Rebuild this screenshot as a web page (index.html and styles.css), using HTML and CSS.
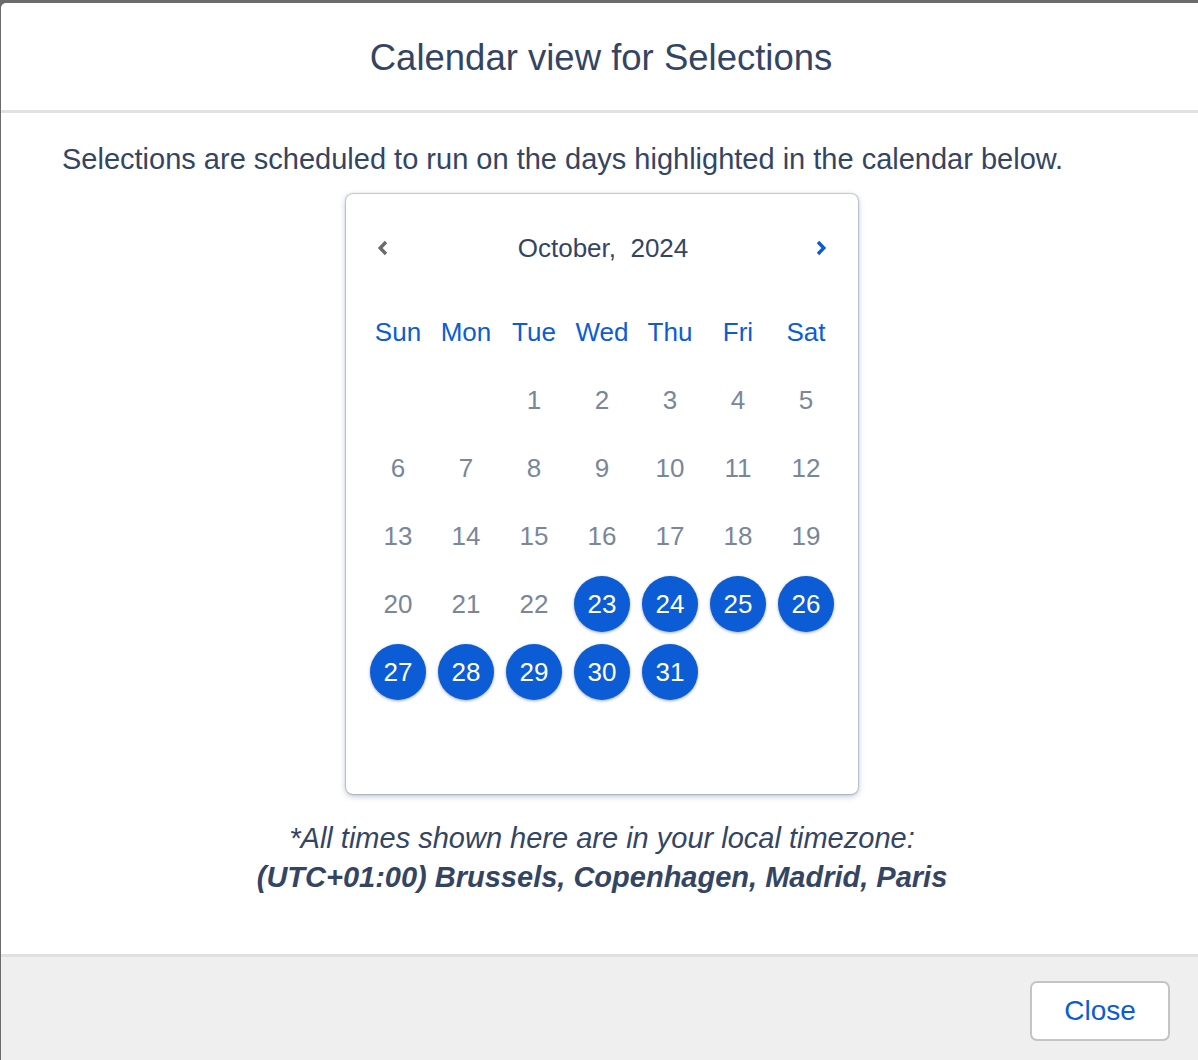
FILE: index.html
```html
<!DOCTYPE html>
<html>
<head>
<meta charset="utf-8">
<link rel="stylesheet" href="styles.css">
</head>
<body>
<div class="backdrop">
  <div class="modal">
    <div class="modal-header">
      <h1 class="modal-title">Calendar view for Selections</h1>
    </div>
    <div class="modal-body">
      <p class="intro">Selections are scheduled to run on the days highlighted in the calendar below.</p>
      <div class="calendar">
        <div class="cal-nav">
          <span class="nav-btn"><svg width="14" height="18" viewBox="0 0 14 18"><path d="M10 3 L4.2 9 L10 15" fill="none" stroke="#6b6b6b" stroke-width="3.4"/></svg></span>
          <span class="cal-month">October,&nbsp; 2024</span>
          <span class="nav-btn"><svg width="14" height="18" viewBox="0 0 14 18"><path d="M4 3 L9.8 9 L4 15" fill="none" stroke="#0b5cd5" stroke-width="3.4"/></svg></span>
        </div>
        <div class="cal-grid">
          <span class="wd">Sun</span><span class="wd">Mon</span><span class="wd">Tue</span><span class="wd">Wed</span><span class="wd">Thu</span><span class="wd">Fri</span><span class="wd">Sat</span>
          <span class="day"></span><span class="day"></span>
          <span class="day"><i>1</i></span><span class="day"><i>2</i></span><span class="day"><i>3</i></span><span class="day"><i>4</i></span><span class="day"><i>5</i></span>
          <span class="day"><i>6</i></span><span class="day"><i>7</i></span><span class="day"><i>8</i></span><span class="day"><i>9</i></span><span class="day"><i>10</i></span><span class="day"><i>11</i></span><span class="day"><i>12</i></span>
          <span class="day"><i>13</i></span><span class="day"><i>14</i></span><span class="day"><i>15</i></span><span class="day"><i>16</i></span><span class="day"><i>17</i></span><span class="day"><i>18</i></span><span class="day"><i>19</i></span>
          <span class="day"><i>20</i></span><span class="day"><i>21</i></span><span class="day"><i>22</i></span><span class="day on"><i>23</i></span><span class="day on"><i>24</i></span><span class="day on"><i>25</i></span><span class="day on"><i>26</i></span>
          <span class="day on"><i>27</i></span><span class="day on"><i>28</i></span><span class="day on"><i>29</i></span><span class="day on"><i>30</i></span><span class="day on"><i>31</i></span><span class="day"></span><span class="day"></span>
          <span class="day"></span><span class="day"></span><span class="day"></span><span class="day"></span><span class="day"></span><span class="day"></span><span class="day"></span>
        </div>
      </div>
      <div class="note">
        <div class="note-line">*All times shown here are in your local timezone:</div>
        <div class="note-line strong">(UTC+01:00) Brussels, Copenhagen, Madrid, Paris</div>
      </div>
    </div>
    <div class="modal-footer">
      <button class="btn-close">Close</button>
    </div>
  </div>
</div>
</body>
</html>
```
FILE: styles.css
```css
html,body{margin:0;padding:0}
body{
  background:#6b6b6b;
  font-family:"Liberation Sans",Arial,sans-serif;
  color:#344563;
  width:1198px;height:1060px;overflow:hidden;
}
.backdrop{padding:3px 0 0 1px}
.modal{
  width:1200px;height:1057px;
  background:#fff;
  border-top-left-radius:5px;
  display:flex;flex-direction:column;
}
.modal-header{
  height:107px;
  border-bottom:3px solid #e1e1e1;
  display:flex;align-items:center;justify-content:center;
}
.modal-title{
  margin:0;font-weight:normal;font-size:36.5px;color:#344563;
  padding-top:2px;
}
.modal-body{
  flex:1;
  display:flex;flex-direction:column;align-items:center;
  padding-top:29px;
}
.intro{
  margin:0;align-self:flex-start;padding-left:61px;
  font-size:29px;line-height:34px;
}
.calendar{
  margin-top:18px;
  width:512px;height:600px;box-sizing:border-box;
  border-radius:7px;
  box-shadow:0 0 1px 1px rgba(120,135,160,.4),0 2px 6px rgba(110,125,155,.5);
  padding:20px 18px;
  margin-left:2px;
}
.cal-nav{
  height:68px;
  display:flex;align-items:center;justify-content:space-between;
  padding:0 12px 0 12px;
  margin-bottom:16px;
}
.nav-btn{display:flex;width:14px}
.cal-month{font-size:26px;color:#344563;margin-left:2px}
.cal-grid{
  display:grid;grid-template-columns:repeat(7,68px);grid-auto-rows:68px;
}
.wd{
  display:flex;align-items:center;justify-content:center;
  font-size:26px;color:#0b5cd5;
}
.day{display:flex;align-items:center;justify-content:center}
.day i{
  font-style:normal;font-size:26px;color:#7a869a;
  width:56px;height:56px;border-radius:50%;
  display:flex;align-items:center;justify-content:center;
}
.day.on i{
  background:#0b5cd5;color:#fff;
  box-shadow:0 1px 3px rgba(40,60,110,.45);
}
.note{
  margin-top:25px;text-align:center;
  font-style:italic;font-size:29px;line-height:39px;
  margin-left:2px;
}
.note-line.strong{font-weight:bold}
.modal-footer{
  height:79px;
  border-top:3px solid #e1e1e1;
  background:#efefef;
  display:flex;justify-content:flex-end;align-items:flex-start;
  padding:24px 31px 0 0;box-sizing:content-box;
}
.btn-close{
  width:140px;height:60px;
  background:#fff;border:2px solid #c4c4c4;border-radius:7px;
  font-family:"Liberation Sans",Arial,sans-serif;
  font-size:28px;color:#0b5cd5;
}
```
